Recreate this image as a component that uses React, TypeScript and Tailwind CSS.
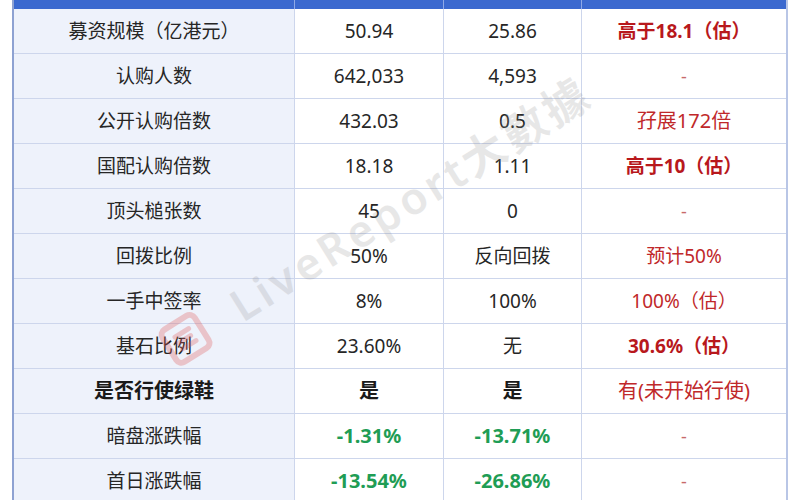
import React from "react";

type Cell = { t: string; c?: "red" | "redb" | "green" | "b" | "redl" | "dash" };
const rows: Cell[][] = [
  [{ t: "募资规模（亿港元）" }, { t: "50.94" }, { t: "25.86" }, { t: "高于18.1（估）", c: "redb" }],
  [{ t: "认购人数" }, { t: "642,033" }, { t: "4,593" }, { t: "-", c: "dash" }],
  [{ t: "公开认购倍数" }, { t: "432.03" }, { t: "0.5" }, { t: "孖展172倍", c: "redl" }],
  [{ t: "国配认购倍数" }, { t: "18.18" }, { t: "1.11" }, { t: "高于10（估）", c: "redb" }],
  [{ t: "顶头槌张数" }, { t: "45" }, { t: "0" }, { t: "-", c: "dash" }],
  [{ t: "回拨比例" }, { t: "50%" }, { t: "反向回拨" }, { t: "预计50%", c: "red" }],
  [{ t: "一手中签率" }, { t: "8%" }, { t: "100%" }, { t: "100%（估）", c: "red" }],
  [{ t: "基石比例" }, { t: "23.60%" }, { t: "无" }, { t: "30.6%（估）", c: "redb" }],
  [{ t: "是否行使绿鞋", c: "b" }, { t: "是", c: "b" }, { t: "是", c: "b" }, { t: "有(未开始行使)", c: "redl" }],
  [{ t: "暗盘涨跌幅" }, { t: "-1.31%", c: "green" }, { t: "-13.71%", c: "green" }, { t: "-", c: "dash" }],
  [{ t: "首日涨跌幅" }, { t: "-13.54%", c: "green" }, { t: "-26.86%", c: "green" }, { t: "-", c: "dash" }],
];

function cls(c?: Cell["c"]) {
  switch (c) {
    case "dash":
      return "text-[#c86a6a] text-[18px]";
    case "red":
      return "text-[#c0282a] text-[19px]";
    case "redl":
      return "text-[#c0282a] text-[20px]";
    case "redb":
      return "text-[#b8181c] font-bold text-[19px]";
    case "green":
      return "text-[#1f9d55] font-bold text-[20px]";
    case "b":
      return "text-[#1a1a1a] font-bold text-[20px]";
    default:
      return "text-[#262626] text-[19px]";
  }
}

export default function App() {
  return (
    <div
      className="relative w-[800px] h-[500px] overflow-hidden bg-white"
      style={{ fontFamily: '"Noto Sans", "Noto Sans CJK SC", sans-serif' }}
    >
      <div className="ml-[12px] w-[776px] border-l-2 border-r-2 border-l-[#8ea2d2] border-r-[#b9c6e6]">
        <div className="grid grid-cols-[281px_149px_138px_1fr] h-[9px] bg-[#3b69cf]">
          <div className="border-r border-[#8fa9e6]" />
          <div className="border-r border-[#8fa9e6]" />
          <div className="border-r border-[#8fa9e6]" />
          <div />
        </div>
        {rows.map((r, i) => (
          <div
            key={i}
            className="grid grid-cols-[281px_149px_138px_1fr] h-[45px] border-b border-[#cdd6ec]"
          >
            {r.map((cell, j) => (
              <div
                key={j}
                className={`flex items-center justify-center ${
                  j === 0 ? "bg-[#eef2fb]" : "bg-white"
                } ${j < 3 ? "border-r border-[#cdd6ec]" : ""} ${cls(cell.c)}`}
              >
                {cell.t}
              </div>
            ))}
          </div>
        ))}
      </div>

      <div
        className="absolute left-[166px] top-[318px] flex items-center gap-[34px] pointer-events-none"
        style={{ transform: "rotate(-32deg)", transformOrigin: "left center" }}
      >
        <svg width="46" height="46" viewBox="0 0 46 46" className="opacity-30">
          <rect x="4" y="4" width="38" height="38" rx="6" fill="none" stroke="#e05a5a" strokeWidth="6" />
          <path d="M15 16 H31 M15 23 H29 M15 30 H31" stroke="#e05a5a" strokeWidth="5" strokeLinecap="round" />
        </svg>
        <span className="text-[44px] font-semibold tracking-[4px] text-[#8a8a8a] opacity-20 whitespace-nowrap">
          LiveReport大數據
        </span>
      </div>
    </div>
  );
}
